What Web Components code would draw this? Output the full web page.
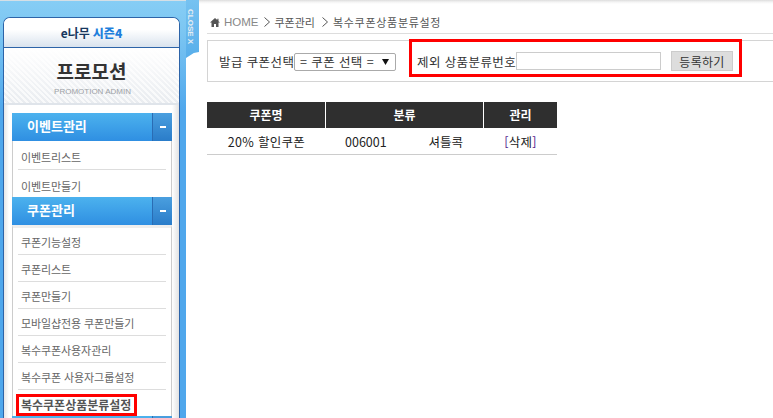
<!DOCTYPE html>
<html lang="ko">
<head>
<meta charset="utf-8">
<title>복수쿠폰상품분류설정</title>
<style>
    html, body { margin: 0; padding: 0; height: 100%; overflow: hidden; background: #fff; }
    body { font-family: "Noto Sans CJK KR", "Liberation Sans", sans-serif; font-size: 11px; color: #333; }
</style>
</head>
<body>
<admin-shell>
    <side-bar slot="side">
        <side-menu label="이벤트관리">
            <menu-item>이벤트리스트</menu-item>
            <menu-item last>이벤트만들기</menu-item>
        </side-menu>
        <side-menu label="쿠폰관리" gap>
            <menu-item>쿠폰기능설정</menu-item>
            <menu-item>쿠폰리스트</menu-item>
            <menu-item>쿠폰만들기</menu-item>
            <menu-item>모바일샵전용 쿠폰만들기</menu-item>
            <menu-item>복수쿠폰사용자관리</menu-item>
            <menu-item>복수쿠폰 사용자그룹설정</menu-item>
            <menu-item marked last>복수쿠폰상품분류설정</menu-item>
        </side-menu>
        <side-menu></side-menu>
    </side-bar>
    <bread-crumb></bread-crumb>
    <coupon-filter></coupon-filter>
    <coupon-table></coupon-table>
</admin-shell>

<script>
class adminShell extends HTMLElement {
    constructor() {
        super();
        this.shadowDOM = this.attachShadow({mode: "open"});
    }

    connectedCallback() {
        this.shadowDOM.innerHTML = `
        <style>
            :host {
                display: flex;
                height: 418px;
                overflow: hidden;
            }
            main {
                flex: 1;
                min-width: 0;
                padding: 13px 0 0 8px;
                background: linear-gradient(to bottom, #ddd 0, #f4f4f4 2px, #fff 4px);
            }
        </style>
        <slot name="side"></slot>
        <main><slot></slot></main>`;
    }
}

class sideBar extends HTMLElement {
    constructor() {
        super();
        this.shadowDOM = this.attachShadow({mode: "open"});
    }

    connectedCallback() {
        this.shadowDOM.innerHTML = `
        <style>
            * { box-sizing: border-box; }
            :host {
                display: flex;
                flex: none;
                width: 199px;
                height: 418px;
                align-items: flex-start;
                background: linear-gradient(to bottom, #ddd 0, #f4f4f4 2px, #fff 4px);
            }
            .rail {
                width: 186px;
                height: 418px;
                padding: 17px 6px 0 3px;
                background: linear-gradient(to bottom, #86cdf5 0, #7cc6f2 30px, #4fa7ec 110px);
                border-top: 1px solid #d5dfe6;
                overflow: hidden;
            }
            .panel {
                height: 420px;
                margin-top: -1px;
                border: 1px solid #2d64a8;
                border-bottom: 0;
                border-radius: 7px 7px 0 0;
                background: #fff;
            }
            .brand {
                height: 30px;
                display: flex;
                align-items: center;
                justify-content: center;
                font-size: 12px;
                font-weight: 700;
                color: #17375e;
                background: linear-gradient(to bottom, #fff 0, #fff 40%, #d9e3ee 100%);
                border-bottom: 1px solid #2d64a8;
                border-radius: 6px 6px 0 0;
            }
            .brand b { color: #1f7fdc; margin-left: 3px; }
            .title {
                height: 57px;
                display: flex;
                flex-direction: column;
                align-items: center;
                border-bottom: 2px solid #dfe4ea;
                background:
                    linear-gradient(to bottom, #fff 0, rgba(255, 255, 255, 0) 100%),
                    repeating-linear-gradient(45deg, #f8f9fa 0 2px, #e9ecf0 2px 4px);
            }
            h1 {
                margin: 11px 0 0;
                font-size: 19px;
                line-height: 24px;
                font-weight: 700;
                color: #333;
                height: 19px;
            }
            small {
                margin: 9px 0 0 2px;
                font: 8px/10px "Liberation Sans", sans-serif;
                color: #9da1a6;
            }
            nav {
                height: 320px;
                padding: 8px 8px 0;
                background: linear-gradient(to right, #e6e6e6 0, #fff 5px, #fff 168px, #e2e2e2 100%);
            }
            .tab {
                flex: none;
                width: 13px;
                height: 58px;
                padding: 9px 5px 0 0;
                background: linear-gradient(to bottom, #76c2f1, #58aeea);
                clip-path: polygon(0 0, 100% 0, 100% 52px, 60% 53px, 0 100%);
                writing-mode: vertical-rl;
                font: 700 8px/8px "Liberation Sans", sans-serif;
                color: #e6edf3;
            }
        </style>
        <div class="rail">
            <div class="panel">
                <div class="brand">e나무 <b>시즌4</b></div>
                <div class="title">
                    <h1>프로모션</h1>
                    <small>PROMOTION ADMIN</small>
                </div>
                <nav><slot></slot></nav>
            </div>
        </div>
        <div class="tab">CLOSE X</div>`;
    }
}

class sideMenu extends HTMLElement {
    constructor() {
        super();
        this.shadowDOM = this.attachShadow({mode: "open"});
    }

    connectedCallback() {
        this.shadowDOM.innerHTML = `
        <style>
            * { box-sizing: border-box; }
            :host {
                display: block;
                width: 160px;
            }
            .head {
                display: flex;
                height: 28px;
                color: #fff;
                font-size: 13px;
                font-weight: 700;
                line-height: 26px;
                background: linear-gradient(to bottom, #4cb2ee, #2f8fe2);
            }
            .head span { flex: 1; padding-left: 15px; }
            .head i {
                display: flex;
                align-items: center;
                justify-content: center;
                width: 20px;
                border-left: 1px solid #2a6cb4;
                background: linear-gradient(to bottom, #4a9fdf, #2a7cc9);
            }
            .head i::before {
                content: "";
                width: 6px;
                height: 2px;
                background: #fff;
            }
            .body {
                background: #fff;
                border: solid #ccc;
                border-width: 0 1px;
                padding: 0 5px;
            }
            :host([gap]) .body {
                border-top: 3px solid #eee;
            }
            :host(:not([gap])) .body { padding-top: 2px; }
        </style>
        <div class="head"><span>${this.getAttribute("label") || ""}</span><i></i></div>
        <div class="body"><slot></slot></div>`;
    }
}

class menuItem extends HTMLElement {
    constructor() {
        super();
        this.shadowDOM = this.attachShadow({mode: "open"});
    }

    connectedCallback() {
        this.shadowDOM.innerHTML = `
        <style>
            :host {
                display: block;
                box-sizing: border-box;
                height: 27px;
                padding: 0 0 0 3px;
                line-height: 29px;
                font-size: 11px;
                letter-spacing: -.1px;
                color: #666;
                white-space: nowrap;
                border-bottom: 1px solid #ddd;
            }
            :host([last]) { border-bottom: 0; line-height: 32px; }
            :host([marked]) { height: 26px; padding: 4px 0 0; line-height: 16px; }
            .mark {
                display: block;
                box-sizing: border-box;
                width: 121px;
                height: 22px;
                margin-left: -2px;
                padding-left: 2px;
                line-height: 16px;
                border: 3px solid #f00;
                font-size: 12px;
                letter-spacing: 0;
                font-weight: 700;
                color: #555;
            }
        </style>
        ${this.hasAttribute("marked") ? `<span class="mark"><slot></slot></span>` : `<slot></slot>`}`;
    }
}

class breadCrumb extends HTMLElement {
    constructor() {
        super();
        this.shadowDOM = this.attachShadow({mode: "open"});
    }

    connectedCallback() {
        const chevron = `<svg class="sep" width="6" height="10" viewBox="0 0 6 10"><path d="M.5.5 5.500 5 .5 9.500" fill="none" stroke="#555"/></svg>`;
        this.shadowDOM.innerHTML = `
        <style>
            :host {
                display: flex;
                align-items: center;
                gap: 5px;
                height: 18px;
                padding: 0 0 2px 3px;
                border-bottom: 1px solid #ddd;
                font-size: 11px;
                color: #555;
                white-space: nowrap;
            }
            .home { margin-left: -1px; color: #888; font: 11.500px "Liberation Sans", sans-serif; }
            .sep + span + .sep { margin-left: 2px; }
            .long { letter-spacing: .7px; }
        </style>
        <svg width="10" height="9" viewBox="0 0 10 9"><path d="M5 0 0 4.500h1.500V9h2.500V6h2v3h2.500V4.500H10L8.500 3.200V.8H7.300v1.300z" fill="#555"/></svg>
        <span class="home">HOME</span>
        ${chevron}
        <span>쿠폰관리</span>
        ${chevron}
        <span class="long">복수쿠폰상품분류설정</span>`;
    }
}

class couponFilter extends HTMLElement {
    constructor() {
        super();
        this.shadowDOM = this.attachShadow({mode: "open"});
    }

    connectedCallback() {
        this.shadowDOM.innerHTML = `
        <style>
            * { box-sizing: border-box; }
            :host {
                display: flex;
                box-sizing: border-box;
                align-items: flex-start;
                height: 42px;
                margin-top: 6px;
                padding-left: 11px;
                border: 1px solid #d4d4d4;
                border-right: 0;
                font-size: 12.500px;
                letter-spacing: .4px;
                color: #333;
                white-space: nowrap;
            }
            .pick {
                display: flex;
                align-items: center;
                margin-top: 11px;
            }
            .pick label { width: 75px; }
            .sel {
                display: flex;
                align-items: center;
                justify-content: space-between;
                width: 102px;
                height: 18px;
                padding: 0 6px 0 5px;
                border: 1px solid #aaa;
                border-radius: 2px;
            }
            .mark {
                display: flex;
                align-items: center;
                width: 333px;
                height: 38px;
                margin: -2px 0 0 13px;
                padding: 6px 0 0 5px;
                border: 3px solid #f00;
            }
            .mark label { width: 99px; }
            .num {
                width: 145px;
                height: 18px;
                border: 1px solid #ccc;
                background: #fff;
                margin-right: 10px;
            }
            button {
                width: 62px;
                height: 20px;
                padding: 0;
                border: 1px solid #ccc;
                background: #ddd;
                font: inherit;
                font-size: 12px;
                letter-spacing: .3px;
                color: #333;
            }
        </style>
        <div class="pick">
            <label>발급 쿠폰선택</label>
            <div class="sel"><span>= 쿠폰 선택 =</span><svg width="7" height="6" viewBox="0 0 7 6"><path d="M0 0h7L3.500 6z" fill="#111"/></svg></div>
        </div>
        <div class="mark"><label>제외 상품분류번호</label><div class="num"></div><button>등록하기</button></div>`;
    }
}

class couponTable extends HTMLElement {
    constructor() {
        super();
        this.shadowDOM = this.attachShadow({mode: "open"});
    }

    connectedCallback() {
        this.shadowDOM.innerHTML = `
        <style>
            * { box-sizing: border-box; }
            :host {
                display: grid;
                grid-template-columns: 119px 158px 73px;
                width: 350px;
                margin-top: 20px;
                font-size: 12.500px;
                color: #222;
                text-align: center;
            }
            .th {
                height: 26px;
                line-height: 26px;
                font-size: 12px;
                background: #2f2f2f;
                color: #fff;
                font-weight: 700;
                border-right: 1px solid #fff;
            }
            .th:nth-of-type(3) { border-right: 0; }
            .td {
                height: 27px;
                line-height: 27px;
                letter-spacing: .3px;
                border-bottom: 1px solid #ccc;
                white-space: nowrap;
            }
            .split {
                display: flex;
                justify-content: space-between;
                padding: 0 21px 0 19px;
                letter-spacing: 0;
            }
            a { color: #222; text-decoration: none; }
            a span { color: #551a8b; }
        </style>
        <div class="th">쿠폰명</div>
        <div class="th">분류</div>
        <div class="th">관리</div>
        <div class="td">20% 할인쿠폰</div>
        <div class="td split"><span>006001</span><span>셔틀콕</span></div>
        <div class="td"><a href="#"><span>[</span>삭제<span>]</span></a></div>`;
    }
}

customElements.define("admin-shell", adminShell);
customElements.define("side-bar", sideBar);
customElements.define("side-menu", sideMenu);
customElements.define("menu-item", menuItem);
customElements.define("bread-crumb", breadCrumb);
customElements.define("coupon-filter", couponFilter);
customElements.define("coupon-table", couponTable);
</script>
</body>
</html>
